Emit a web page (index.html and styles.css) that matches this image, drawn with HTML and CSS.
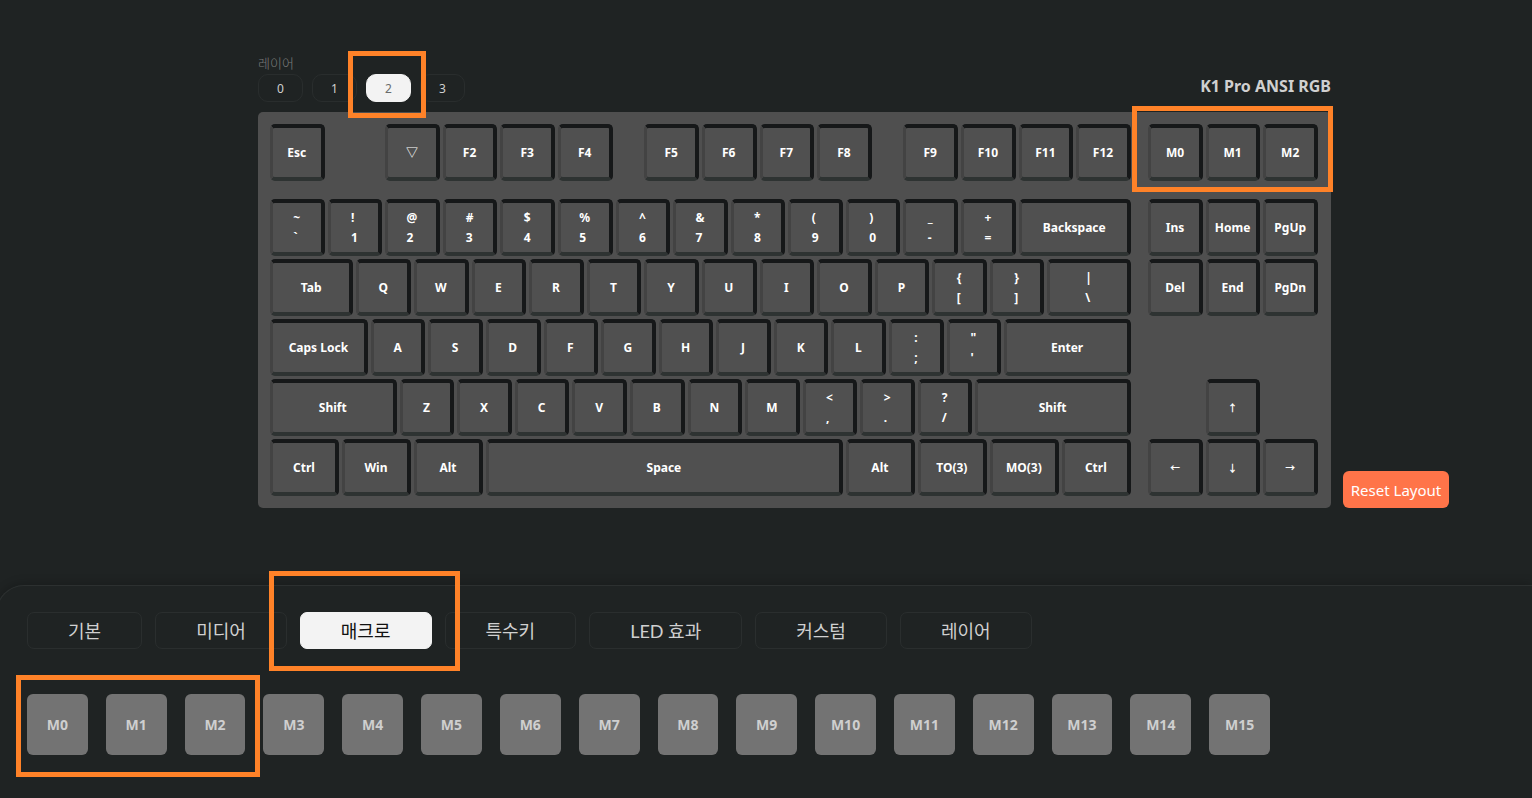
FILE: index.html
```html
<!DOCTYPE html>
<html lang="ko">
<head>
<meta charset="utf-8">
<meta name="viewport" content="width=device-width, initial-scale=1">
<title>K1 Pro ANSI RGB</title>
<link rel="stylesheet" href="styles.css">
</head>
<body>
<main class="workspace">
  <section class="editor">
    <header class="editor-head">
      <div class="layers">
        <span class="layers-label" id="layers-label">레이어</span>
        <div class="layer-list" role="group" aria-labelledby="layers-label">
          <button class="layer" type="button">0</button>
          <button class="layer" type="button">1</button>
          <div class="marked">
            <button class="layer active" type="button" aria-pressed="true">2</button>
            <span class="mark mark-layer"></span>
          </div>
          <button class="layer" type="button">3</button>
        </div>
      </div>
      <h1 class="model">K1 Pro ANSI RGB</h1>
    </header>
    <div class="board">
      <div class="row row-fn">
        <button class="key">Esc</button><span class="s4"></span>
        <button class="key">▽</button><button class="key">F2</button><button class="key">F3</button><button class="key">F4</button><span class="s2"></span>
        <button class="key">F5</button><button class="key">F6</button><button class="key">F7</button><button class="key">F8</button><span class="s2"></span>
        <button class="key">F9</button><button class="key">F10</button><button class="key">F11</button><button class="key">F12</button><span class="s1"></span>
        <button class="key">M0</button><button class="key">M1</button><button class="key">M2</button>
      </div>
      <div class="row">
        <button class="key"><span>~<br>`</span></button><button class="key"><span>!<br>1</span></button><button class="key"><span>@<br>2</span></button><button class="key"><span>#<br>3</span></button><button class="key"><span>$<br>4</span></button><button class="key"><span>%<br>5</span></button><button class="key"><span>^<br>6</span></button><button class="key"><span>&amp;<br>7</span></button><button class="key"><span>*<br>8</span></button><button class="key"><span>(<br>9</span></button><button class="key"><span>)<br>0</span></button><button class="key"><span>_<br>-</span></button><button class="key"><span>+<br>=</span></button><button class="key s8">Backspace</button><span class="s1"></span>
        <button class="key">Ins</button><button class="key">Home</button><button class="key">PgUp</button>
      </div>
      <div class="row">
        <button class="key s6">Tab</button><button class="key">Q</button><button class="key">W</button><button class="key">E</button><button class="key">R</button><button class="key">T</button><button class="key">Y</button><button class="key">U</button><button class="key">I</button><button class="key">O</button><button class="key">P</button><button class="key"><span>{<br>[</span></button><button class="key"><span>}<br>]</span></button><button class="key s6"><span>|<br>\</span></button><span class="s1"></span>
        <button class="key">Del</button><button class="key">End</button><button class="key">PgDn</button>
      </div>
      <div class="row">
        <button class="key s7">Caps Lock</button><button class="key">A</button><button class="key">S</button><button class="key">D</button><button class="key">F</button><button class="key">G</button><button class="key">H</button><button class="key">J</button><button class="key">K</button><button class="key">L</button><button class="key"><span>:<br>;</span></button><button class="key"><span>"<br>'</span></button><button class="key s9">Enter</button>
      </div>
      <div class="row">
        <button class="key s9">Shift</button><button class="key">Z</button><button class="key">X</button><button class="key">C</button><button class="key">V</button><button class="key">B</button><button class="key">N</button><button class="key">M</button><button class="key"><span>&lt;<br>,</span></button><button class="key"><span>&gt;<br>.</span></button><button class="key"><span>?<br>/</span></button><button class="key s11">Shift</button><span class="s5"></span>
        <button class="key arrow">↑</button>
      </div>
      <div class="row">
        <button class="key s5">Ctrl</button><button class="key s5">Win</button><button class="key s5">Alt</button><button class="key s25">Space</button><button class="key s5">Alt</button><button class="key s5">TO(3)</button><button class="key s5">MO(3)</button><button class="key s5">Ctrl</button><span class="s1"></span>
        <button class="key arrow">←</button><button class="key arrow">↓</button><button class="key arrow">→</button>
      </div>
      <span class="mark mark-board"></span>
    </div>
  </section>
  <button class="reset" type="button">Reset Layout</button>
</main>
<section class="panel">
  <nav class="tabs">
    <button class="tab" type="button">기본</button>
    <button class="tab" type="button">미디어</button>
    <div class="marked">
      <button class="tab active" type="button">매크로</button>
      <span class="mark mark-tab"></span>
    </div>
    <button class="tab" type="button">특수키</button>
    <button class="tab" type="button">LED 효과</button>
    <button class="tab" type="button">커스텀</button>
    <button class="tab" type="button">레이어</button>
  </nav>
  <div class="macros">
    <button class="macro">M0</button><button class="macro">M1</button><button class="macro">M2</button><button class="macro">M3</button>
    <button class="macro">M4</button><button class="macro">M5</button><button class="macro">M6</button><button class="macro">M7</button>
    <button class="macro">M8</button><button class="macro">M9</button><button class="macro">M10</button><button class="macro">M11</button>
    <button class="macro">M12</button><button class="macro">M13</button><button class="macro">M14</button><button class="macro">M15</button>
    <span class="mark mark-macros"></span>
  </div>
</section>
</body>
</html>
```

FILE: styles.css
```css
* {
  box-sizing: border-box;
}

body {
  margin: 0;
  min-height: 100vh;
  display: flex;
  flex-direction: column;
  overflow-x: hidden;
  background: #1f2323;
  color: #d0d0d0;
  font-family: "Noto Sans", "Noto Sans CJK KR", sans-serif;
}

button {
  margin: 0;
  padding: 0;
  border: 0;
  font-family: inherit;
  color: inherit;
  cursor: pointer;
}

.workspace {
  display: flex;
  align-items: flex-end;
  gap: 12px;
  padding: 54px 83px 77px 258px;
}

.editor {
  flex: 1;
  min-width: 0;
}

.editor-head {
  display: flex;
  justify-content: space-between;
  align-items: flex-end;
  padding-bottom: 10px;
}

.layers-label {
  display: block;
  font-size: 13px;
  line-height: 18px;
  font-weight: 300;
  color: #7c7c7c;
}

.layer-list {
  display: flex;
  gap: 9px;
  margin-top: 2px;
}

.layer {
  display: block;
  width: 45px;
  height: 28px;
  border: 1px solid #292d2d;
  border-radius: 10px;
  background: transparent;
  font-size: 12px;
}

.layer.active {
  background: #f3f3f3;
  border-color: #f3f3f3;
  color: #6a6c6c;
}

.model {
  margin: 0;
  font-size: 16px;
  line-height: 32px;
  font-weight: 700;
}

.board {
  position: relative;
  display: grid;
  gap: 3px;
  padding: 12px 10px 12px 12px;
  border-radius: 5px;
  background: #4f4f4f;
}

.row {
  display: grid;
  grid-template-columns: repeat(73, minmax(0, 1fr));
}

.row-fn {
  margin-bottom: 15px;
}

.key {
  grid-column: span 4;
  display: flex;
  align-items: center;
  justify-content: center;
  height: 57px;
  margin-right: 3px;
  border-style: solid;
  border-width: 4px 4px 4px 3px;
  border-color: #161819 #161819 #2e3332 #434343;
  border-radius: 5px;
  background: #505050;
  color: #fff;
  font-size: 12px;
  line-height: 20px;
  font-weight: 700;
  text-align: left;
}

.key.arrow {
  font-size: 10px;
}

.s1 { grid-column: span 1; }
.s2 { grid-column: span 2; }
.s4 { grid-column: span 4; }
.s5 { grid-column: span 5; }
.s6 { grid-column: span 6; }
.s7 { grid-column: span 7; }
.s8 { grid-column: span 8; }
.s9 { grid-column: span 9; }
.s11 { grid-column: span 11; }
.s25 { grid-column: span 25; }

.reset {
  width: 106px;
  height: 37px;
  border-radius: 6px;
  background: #ff7449;
  color: #fff;
  font-size: 15px;
  white-space: nowrap;
}

.panel {
  flex: 1;
  margin-left: -4px;
  padding: 26px 30px 43px;
  border-top: 1px solid #2c3030;
  border-left: 1px solid #2c3030;
  border-top-left-radius: 28px;
  box-shadow: 0 -2px 10px rgba(0, 0, 0, 0.2);
}

.tabs {
  display: flex;
  flex-wrap: wrap;
  gap: 13px;
}

.tab {
  display: block;
  height: 37px;
  padding: 0 40px;
  border: 1px solid #2a2e2e;
  border-radius: 7px;
  background: transparent;
  font-family: Lato, "Noto Sans CJK KR", sans-serif;
  font-size: 18px;
  line-height: 24px;
}

.tab.active {
  background: #f3f3f3;
  border-color: #f3f3f3;
  color: #111;
}

.macros {
  position: relative;
  display: grid;
  grid-template-columns: repeat(16, minmax(0, 1fr));
  gap: 18px;
  max-width: 1243px;
  margin-top: 45px;
}

.macro {
  aspect-ratio: 1;
  border-radius: 6px;
  background: #737373;
  color: #cfcfcf;
  font-size: 14px;
  font-weight: 700;
}

/* Orange callout frames drawn over the controls */
.marked {
  position: relative;
}

.mark {
  position: absolute;
  z-index: 2;
  border: 5px solid #ff8228;
  pointer-events: none;
}

.mark-layer {
  inset: -23px -15px -16px -18px;
}

.mark-board {
  top: -6px;
  right: -2px;
  width: 201px;
  height: 86px;
}

.mark-tab {
  inset: -41px -28px -22px -31px;
}

.mark-macros {
  top: -19px;
  left: -11px;
  width: 244px;
  height: 102px;
}
```
